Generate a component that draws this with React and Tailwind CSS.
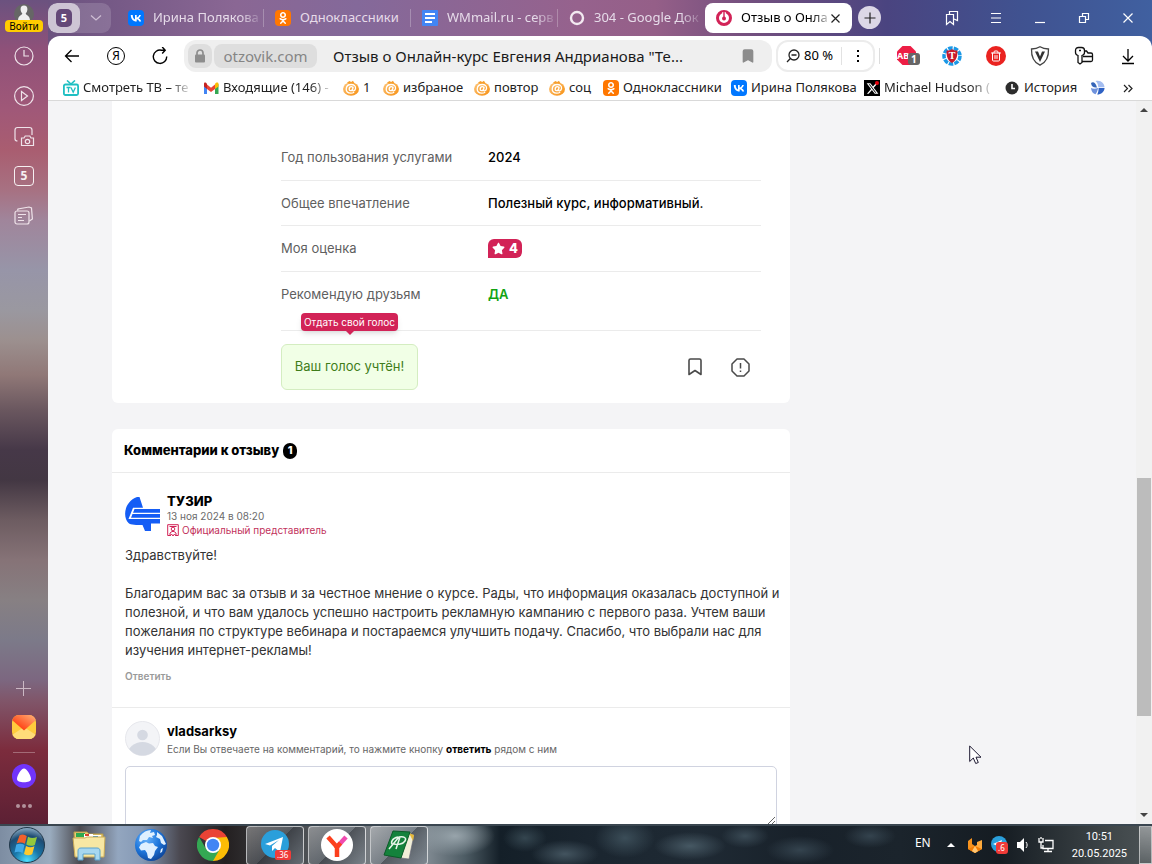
import React, { useState } from 'react';
import { FaOdnoklassniki, FaStar, FaXTwitter } from 'react-icons/fa6';
import { Bookmark, Trash2 } from 'lucide-react';

const VkIcon = () => (
  <svg className="size-4 shrink-0" viewBox="0 0 16 16">
    <rect width="16" height="16" rx="4" fill="#0077ff" />
    <path
      d="M8.600 11.500C5 11.500 2.900 9 2.800 5h1.900c.06 3 1.300 4.200 2.300 4.500V5h1.700v2.500c1-.1 2.100-1.300 2.500-2.500h1.700c-.3 1.500-1.400 2.700-2.300 3.200.8.4 2.100 1.400 2.600 3.300h-1.900c-.4-1.200-1.400-2.200-2.600-2.300v2.300z"
      fill="#fff"
    />
  </svg>
);

const OkIcon = () => (
  <span className="flex size-4 shrink-0 items-center justify-center rounded bg-[#ff7700] text-white">
    <FaOdnoklassniki size={12} />
  </span>
);

const DocIcon = () => (
  <svg className="size-4 shrink-0" viewBox="0 0 16 16">
    <rect width="16" height="16" rx="1" fill="#4285f4" />
    <path d="M3 4h10M3 8h10M3 12h7" stroke="#fff" strokeWidth="1.8" />
  </svg>
);

const RingIcon = () => (
  <svg className="size-4 shrink-0" viewBox="0 0 16 16" fill="none">
    <circle cx="8" cy="8" r="6" stroke="#f3e9f1" strokeWidth="2.4" />
  </svg>
);

const OtzovikIcon = () => (
  <svg className="size-4 shrink-0" viewBox="0 0 16 16" fill="none">
    <circle cx="8" cy="8" r="6.5" stroke="#d22357" strokeWidth="3" />
    <path d="M8 2v4" stroke="#fff" strokeWidth="3.4" />
    <path d="M8 1v6" stroke="#d22357" strokeWidth="1.4" />
    <circle cx="8" cy="8.4" r="2" fill="#d22357" />
  </svg>
);

const AtIcon = () => (
  <svg className="size-4 shrink-0" viewBox="0 0 16 16">
    <defs>
      <linearGradient id="atFill" x1="0" y1="0" x2="1" y2="1">
        <stop offset="0" stopColor="#fdc67c" />
        <stop offset="1" stopColor="#f78f0f" />
      </linearGradient>
    </defs>
    <ellipse cx="8" cy="9" rx="8" ry="6.8" fill="url(#atFill)" />
    <path d="M4 2.6 6.6 1l1.500 1L10 .8l1.400 2.400L8 5z" fill="#f6a02e" />
    <path
      d="M10.200 6.600 9.500 10c-.2 1.500 2.600 1.200 3-1.300.4-2.600-1.600-4.200-4.300-4.200C5.300 4.500 3.300 6.500 3.200 9.100c0 2.700 2 4.100 4.500 4.100 1.400 0 2.600-.4 3.500-1M9.900 8.400c0-1.200-.7-1.700-1.500-1.700-1.300 0-2.200 1.200-2.200 2.500 0 1 .5 1.500 1.300 1.500 1.200 0 2.200-1 2.400-2.300z"
      fill="none"
      stroke="#fff"
      strokeWidth="1.3"
    />
  </svg>
);

const TvIcon = () => (
  <svg className="size-4 shrink-0" viewBox="0 0 16 16" fill="none">
    <rect x=".9" y="4.500" width="14.200" height="10.500" rx="1.500" stroke="#1fbfc2" strokeWidth="1.8" />
    <path d="M4 .5 8 4l4-3.500" stroke="#1fbfc2" strokeWidth="1.6" />
    <path d="M3.500 7.500h4M5.500 7.500v5M8 7.500l2.200 4.700 2.200-4.700" stroke="#1fbfc2" strokeWidth="1.300" />
  </svg>
);

const GmailIcon = () => (
  <svg className="size-4 shrink-0" viewBox="0 0 16 16">
    <path d="M1 14V4l3 2.300V14z" fill="#4285f4" />
    <path d="M12 14V6.300L15.500 4v10z" fill="#34a853" />
    <path d="M4 9V4.500l4 3.200 4-3.200V9l-4 3z" fill="#ea4335" />
    <path d="M1 6.500V4c0-1.700 1.700-2 3 0v5z" fill="#c5221f" />
    <path d="M15.500 6.500V4c0-1.700-2.200-2-3.500 0v5z" fill="#fbbc04" />
  </svg>
);

const XIcon = () => (
  <span className="relative flex size-4 shrink-0 items-center justify-center bg-black text-white">
    <FaXTwitter size={13} />
    <span className="absolute top-px right-px size-1 rounded-full bg-red-600"></span>
  </span>
);

const HistoryIcon = () => (
  <svg className="size-4 shrink-0" viewBox="0 0 16 16">
    <circle cx="8" cy="8" r="6.500" fill="#2d2d2d" />
    <path d="M8 4v4.500h3" fill="none" stroke="#fff" strokeWidth="1.600" />
  </svg>
);

const SwirlIcon = () => (
  <svg className="size-4 shrink-0" viewBox="0 0 16 16">
    <path d="M1 3c2-1.500 4.500-.8 6 4.500C4 8 1.500 7 1 3z" fill="#3565b8" />
    <path d="M5.500 1c5-1.500 9 2 9 6.300H8.300C8 4.500 7.500 2.500 5.500 1z" fill="#a4bdf0" />
    <path d="M1 8c2.500 1 5 .8 7-.3-.3 2.700-1 4.700-2.500 6.500C3 13.500 1.300 11.500 1 8z" fill="#6f92dc" />
    <path d="M8.600 8h6c-.5 4-3.300 6.500-7.400 6.500C8.300 12.500 8.600 10.500 8.600 8z" fill="#2f62c4" />
  </svg>
);

const tabs = [
  { title: 'Ирина Полякова', icon: VkIcon, fade: true },
  { title: 'Одноклассники', icon: OkIcon },
  { title: 'WMmail.ru - серв', icon: DocIcon, fade: true },
  { title: '304 - Google Док', icon: RingIcon, fade: true },
];

const bookmarks = [
  { title: 'Смотреть ТВ – те', icon: TvIcon, width: 'w-[140px]', fade: true },
  { title: 'Входящие (146) -', icon: GmailIcon, width: 'w-[140px]', fade: true },
  { title: '1', icon: AtIcon, width: 'w-10' },
  { title: 'избраное', icon: AtIcon, width: 'w-[91px]' },
  { title: 'повтор', icon: AtIcon, width: 'w-[75px]' },
  { title: 'соц', icon: AtIcon, width: 'w-[54px]' },
  { title: 'Одноклассники', icon: OkIcon, width: 'w-[128px]' },
  { title: 'Ирина Полякова', icon: VkIcon, width: 'w-[133px]' },
  { title: 'Michael Hudson (', icon: XIcon, width: 'w-[140px]', fade: true },
  { title: 'История', icon: HistoryIcon, width: 'w-[86px]' },
  { title: '', icon: SwirlIcon, width: 'w-3.5' },
];

const FADE = '[mask-image:linear-gradient(to_right,black_82%,rgba(0,0,0,0.2))]';

const WindowButton = ({ label, children }) => (
  <button aria-label={label} className="flex h-9 w-11 items-center justify-center">
    <svg width="18" height="18" viewBox="0 0 18 18" fill="none" stroke="#fff" strokeWidth="1.200">
      {children}
    </svg>
  </button>
);

const TabBar = () => (
  <div className="flex h-9 items-center text-[13px]">
    <div className="flex h-[30px] w-[63px] shrink-0 overflow-hidden rounded-[9px] bg-white/15">
      <button className="flex w-8 items-center justify-center rounded-[9px] bg-white/60" aria-label="Группа вкладок">
        <span className="flex h-[18px] w-4 items-center justify-center rounded-[5px] bg-[#644878] text-[11px] font-bold text-white">
          5
        </span>
      </button>
      <button className="flex flex-1 items-center justify-center" aria-label="Список вкладок">
        <svg width="12" height="8" viewBox="0 0 12 8" fill="none" stroke="#cdbdd3" strokeWidth="1.300">
          <path d="m1 1.500 5 4.500 5-4.500" />
        </svg>
      </button>
    </div>
    <div className="ml-1.5 flex min-w-0 flex-1">
      {tabs.map(({ title, icon: Icon, fade }, i) => (
        <button
          key={title}
          className={`my-1.5 flex h-[18px] max-w-[147px] flex-1 items-center gap-[9px] pl-[11px] whitespace-nowrap text-[#e6dbe9] ${
            i < 3 ? 'border-r border-white/25' : ''
          }`}
        >
          <Icon />
          <span className={fade ? FADE : ''}>{title}</span>
        </button>
      ))}
      <div className="flex h-[30px] max-w-[147px] flex-1 items-center rounded-lg bg-white pl-[11px] whitespace-nowrap text-black">
        <OtzovikIcon />
        <span className={`ml-[9px] ${FADE}`}>Отзыв о Онла</span>
        <button aria-label="Закрыть вкладку" className="mr-3 ml-auto">
          <svg width="9" height="9" viewBox="0 0 9 9" stroke="#222" strokeWidth="1.200">
            <path d="m.5.5 8 8m0-8-8 8" />
          </svg>
        </button>
      </div>
      <button
        aria-label="Новая вкладка"
        className="mt-[3px] ml-1.5 flex size-[23px] shrink-0 items-center justify-center rounded-full bg-[#dcd7e6]"
      >
        <svg width="12" height="12" viewBox="0 0 12 12" stroke="#222" strokeWidth="1.200">
          <path d="M6 .5v11M.5 6h11" />
        </svg>
      </button>
    </div>
    <div className="mr-0.5 flex shrink-0">
      <WindowButton label="Закладки">
        <path d="M3.500 5.500h7v10L7 12.500l-3.500 3zM6.500 5.500v-3h8v9l-3.500-1.500" />
      </WindowButton>
      <WindowButton label="Меню">
        <path d="M4 4.500h10M4 9h10M4 13.500h10" />
      </WindowButton>
      <WindowButton label="Свернуть">
        <path d="M4 13.500h10" />
      </WindowButton>
      <WindowButton label="Развернуть">
        <path d="M4.500 7.500h6v6h-6zM7.500 7.500v-3h6v6h-3" />
      </WindowButton>
      <WindowButton label="Закрыть">
        <path d="m4.500 4.500 9 9m0-9-9 9" />
      </WindowButton>
    </div>
  </div>
);

const ToolButton = ({ label, children }) => (
  <button aria-label={label} className="flex h-8 w-11 shrink-0 items-center justify-center">
    {children}
  </button>
);

const Toolbar = () => (
  <div className="flex h-10 items-center pl-0.5">
    <ToolButton label="Назад">
      <svg width="16" height="16" viewBox="0 0 16 16" fill="none" stroke="#000" strokeWidth="1.300">
        <path d="M15 8H2M7.500 2 1.500 8l6 6" />
      </svg>
    </ToolButton>
    <button
      aria-label="Яндекс"
      className="mx-[13px] flex size-[18px] shrink-0 items-center justify-center rounded-full border border-black text-xs leading-none"
    >
      Я
    </button>
    <ToolButton label="Обновить">
      <svg width="18" height="18" viewBox="0 0 18 18" fill="none" stroke="#000" strokeWidth="1.400">
        <path d="M10.500 3.200a6.700 6.700 0 1 0 5.200 6.300M9 3.200h5M11.200 0l3 3.200-3 3.200" />
      </svg>
    </ToolButton>
    <div className="ml-0.5 flex h-8 min-w-0 flex-1 items-center gap-0.5 rounded-xl bg-[#efefef] pr-4 pl-1 text-[15px]">
      <button aria-label="Защищено" className="flex size-6 shrink-0 items-center justify-center rounded-lg bg-[#dedede]">
        <svg width="12" height="14" viewBox="0 0 12 14">
          <rect x="1" y="5.500" width="10" height="8" rx="1" fill="#8d8d8d" />
          <path d="M3 6V4a3 3 0 0 1 6 0v2" fill="none" stroke="#8d8d8d" strokeWidth="1.700" />
        </svg>
      </button>
      <a href="#" className="flex h-6 w-[103px] shrink-0 items-center justify-center rounded-lg bg-[#dedede] text-[#858585]">
        otzovik.com
      </a>
      <span className="ml-3.5 min-w-0 flex-1 truncate text-[#1a1a1a]">Отзыв о Онлайн-курс Евгения Андрианова "Те...</span>
      <button aria-label="В закладки">
        <Bookmark size={16} fill="#8c8c8c" stroke="#8c8c8c" />
      </button>
    </div>
    <div className="ml-1 flex h-8 w-[99px] shrink-0 items-center rounded-xl border-2 border-[#ececec]">
      <button className="flex flex-1 items-center justify-center gap-1 text-[13px]">
        <svg width="14" height="14" viewBox="0 0 14 14" fill="none" stroke="#222" strokeWidth="1.300">
          <circle cx="8" cy="6" r="5" />
          <path d="M4.400 9.500 1 13M5.500 6h5" />
        </svg>
        80 %
      </button>
      <span className="h-[18px] w-px bg-[#e2e2e2]"></span>
      <button aria-label="Ещё" className="flex w-[31px] flex-col items-center gap-[3px]">
        <span className="size-[2px] bg-black"></span>
        <span className="size-[2px] bg-black"></span>
        <span className="size-[2px] bg-black"></span>
      </button>
    </div>
    <span className="ml-1 h-4 w-px shrink-0 bg-[#dcdcdc]"></span>
    <div className="ml-[6px] flex shrink-0">
      <ToolButton label="Блокировщик рекламы">
        <svg width="24" height="22" viewBox="0 0 24 22">
          <path d="M6.500 1h8l5.500 5.500v8L14.500 20h-8L1 14.500v-8z" fill="#ed1e45" />
          <text x="1" y="14" fontSize="9" fontWeight="bold" fill="#fff" fontFamily="Noto Sans, sans-serif">
            AB
          </text>
          <rect x="12" y="8" width="12" height="12" rx="3" fill="#666" />
          <text x="15" y="18" fontSize="10" fontWeight="bold" fill="#fff" fontFamily="Noto Sans, sans-serif">
            1
          </text>
        </svg>
      </ToolButton>
      <ToolButton label="Переводчик">
        <svg width="20" height="20" viewBox="0 0 20 20">
          <circle cx="10" cy="10" r="8" fill="none" stroke="#1b98e6" strokeWidth="3.500" strokeDasharray="4.500 1.100" />
          <path d="M4.500 4.500c2 0 4.500-.5 5.500-1.500 1 1 3.500 1.500 5.500 1.500 0 6-1 10-5.500 12.500-4.500-2.500-5.500-6.500-5.500-12.500z" fill="#c91a2c" />
          <text x="6.700" y="13" fontSize="10" fontWeight="bold" fill="#fff" fontFamily="Liberation Serif, serif">
            T
          </text>
        </svg>
      </ToolButton>
      <ToolButton label="Очистка">
        <span className="flex size-5 items-center justify-center rounded-full bg-[#ea2320] text-white">
          <Trash2 size={12} />
        </span>
      </ToolButton>
      <ToolButton label="Защита">
        <svg width="20" height="20" viewBox="0 0 20 20" fill="none" stroke="#444">
          <path d="M10 .8c2.500 1.600 5.500 2.200 8.500 2.200.3 7.500-2 13.200-8.500 16.200C3.500 16.200 1.200 10.500 1.500 3 4.500 3 7.500 2.400 10 .8z" strokeWidth="1.300" />
          <path d="M5 5.500h3l2 5 2-5h3L10 16z" fill="#333" stroke="none" />
        </svg>
      </ToolButton>
      <ToolButton label="Пароли">
        <svg width="20" height="20" viewBox="0 0 20 20" fill="none" stroke="#111" strokeWidth="1.300">
          <path d="M4 9.500C2.500 9 1.500 8 1.500 6.500v-2C1.500 2.700 2.700 1.500 4.500 1.500h3c1.800 0 3 1.200 3 3v2c0 1.500-1 2.500-2.500 3v7L6 18l-2-1.500z" />
          <path d="M10.500 5h2l1.500 2h3c1 0 1.500.5 1.500 1.500V14c0 1-.5 1.500-1.500 1.500H8M9 10.500h9.500" />
          <path d="M5 4.500h2" />
        </svg>
      </ToolButton>
      <ToolButton label="Загрузки">
        <svg width="14" height="18" viewBox="0 0 14 18" fill="none" stroke="#000" strokeWidth="1.300">
          <path d="M7 2v12M2 9l5 5 5-5M1 16.500h12" />
        </svg>
      </ToolButton>
    </div>
    <span className="w-0.5 shrink-0"></span>
  </div>
);

const BookmarksBar = () => (
  <div className="flex h-[25px] shrink-0 items-center overflow-hidden border-b border-[#d9d9d9] pl-[15px] text-[13px] text-[#222]">
    {bookmarks.map(({ title, icon: Icon, width, fade }, i) => (
      <a key={i} href="#" className={`flex shrink-0 items-center gap-1 whitespace-nowrap ${width}`}>
        <Icon />
        <span className={fade ? FADE : ''}>{title}</span>
      </a>
    ))}
    <button aria-label="Другие закладки" className="ml-auto flex w-12 shrink-0 items-center justify-center">
      <svg width="10" height="9" viewBox="0 0 10 9" fill="none" stroke="#222" strokeWidth="1.200">
        <path d="m1 1 3.500 3.500L1 8m4.500-7L9 4.500 5.500 8" />
      </svg>
    </button>
  </div>
);

const SideButton = ({ label, children }) => (
  <button aria-label={label} className="flex h-10 w-full items-center justify-center">
    <svg width="22" height="22" viewBox="0 0 22 22" fill="none" stroke="#efe3ea" strokeWidth="1.200">
      {children}
    </svg>
  </button>
);

const Sidebar = () => (
  <aside className="flex w-12 shrink-0 flex-col items-center bg-[linear-gradient(to_bottom,#6b527f_0px,#8f5179_50px,#a05878_110px,#a95d70_150px,#a77182_190px,#a0859b_220px,#9795a8_270px,#9a98a0_310px,#9c908f_340px,#907877_375px,#6a575f_410px,#463848_450px,#433743_480px,#6d5c61_520px,#867377_560px,#878083_600px,#7c7a89_640px,#7c6780_680px,#80566a_700px,#7c2c3d_750px,#5c2034_824px)]">
    <button className="flex h-9 flex-col items-center pt-1">
      <svg width="20" height="16" viewBox="0 0 20 16">
        <circle cx="10" cy="10" r="10" fill="#666" />
        <path d="M10 1.500c2.300 0 3.600 1.500 3.400 4-.1 2-1 3.300-1.700 4 0 1.500 3.800 1.500 4.300 6.500H4c.5-5 4.300-5 4.300-6.500-.7-.7-1.600-2-1.700-4-.2-2.500 1.100-4 3.400-4z" fill="#f0f0f0" />
      </svg>
      <span className="rounded bg-[#ffcc00] px-1 text-[10px] leading-3 text-black">Войти</span>
    </button>
    <SideButton label="История">
      <circle cx="11" cy="11" r="9" />
      <path d="M11 5v6h5" />
    </SideButton>
    <SideButton label="Видео">
      <circle cx="11" cy="11" r="9.400" />
      <path d="m8.500 6.500 6 4.500-6 4.500z" />
    </SideButton>
    <SideButton label="Скриншот">
      <path d="M4.500 16C3 16 2 15.500 2 14V5c0-1.500 1-2.500 2.500-2.500h12C18 2.500 19 3.500 19 5v5M8.500 13h2.500l1.200-2h4.600l1.200 2h2.500v7.500H8.500z" />
      <circle cx="14.500" cy="16.500" r="2.200" />
    </SideButton>
    <button aria-label="Вкладки" className="flex h-10 items-center">
      <span className="flex size-5 items-center justify-center rounded border border-white/90 text-xs leading-none font-bold text-white/90">5</span>
    </button>
    <SideButton label="Коллекции">
      <rect x="2" y="6" width="14" height="13" rx="2" />
      <path d="M4.500 5.500 5 4l11-2 2.500 1 .9 11-3 2M5 9.500h8M5 12.500h4M5 15.500h6" />
    </SideButton>

    <button aria-label="Добавить" className="mt-auto">
      <svg width="16" height="16" viewBox="0 0 16 16" stroke="#cbb8c4">
        <path d="M7.500 0v15M0 7.500h15" />
      </svg>
    </button>
    <button aria-label="Почта" className="mt-[18px]">
      <svg width="24" height="24" viewBox="0 0 24 24">
        <defs>
          <linearGradient id="mailFlap" x1="1" y1="0" x2="0" y2="1">
            <stop offset="0" stopColor="#ffb37a" />
            <stop offset=".7" stopColor="#ff4a1c" />
          </linearGradient>
          <clipPath id="mailClip">
            <rect width="24" height="24" rx="7" />
          </clipPath>
        </defs>
        <g clipPath="url(#mailClip)">
          <path d="M0 0h24v24H0z" fill="#ffcb3d" />
          <path d="M0 24 12 13l12 11z" fill="#ffdf80" />
          <path d="M0 20 12 12l12 8v4H0z" fill="#ffdc79" />
          <path d="M0 0h24v5L12 15.500 0 5z" fill="url(#mailFlap)" />
        </g>
      </svg>
    </button>
    <span className="mt-[13px] h-px w-[22px] bg-white/30"></span>
    <button aria-label="Алиса" className="mt-[11px]">
      <svg width="24" height="24" viewBox="0 0 24 24">
        <circle cx="12" cy="12" r="12" fill="#7134fb" />
        <path d="M12 4.500c2.500 0 7 6.500 7 10.500 0 2.500-3 3.200-7 3.200s-7-.7-7-3.200c0-4 4.500-10.500 7-10.500z" fill="#fff" />
      </svg>
    </button>
    <button aria-label="Ещё" className="flex h-9 items-center gap-0.5">
      <span className="size-1 rounded-full bg-white/50"></span>
      <span className="size-1 rounded-full bg-white/50"></span>
      <span className="size-1 rounded-full bg-white/50"></span>
    </button>
  </aside>
);

const ReviewRow = ({ label, height, children }) => (
  <div className={`flex border-b border-[#ebebeb] ${height}`}>
    <dt className="flex h-[45px] w-[207px] shrink-0 items-center text-[#5f5f5f]">{label}</dt>
    <dd className="flex h-[45px] items-center font-medium text-black">{children}</dd>
  </div>
);

const ReviewCard = () => (
  <section className="w-full max-w-[678px] rounded-b-md bg-white pt-[34px] pr-[29px] pb-[13px] pl-[169px]">
    <dl>
      <ReviewRow label="Год пользования услугами" height="h-[46px]">
        2024
      </ReviewRow>
      <ReviewRow label="Общее впечатление" height="h-[45px]">
        Полезный курс, информативный.
      </ReviewRow>
      <ReviewRow label="Моя оценка" height="h-[46px]">
        <span className="flex h-[19px] w-[34px] items-center justify-center gap-1 rounded-md rounded-bl-none bg-[#d22357] font-extrabold text-white">
          <FaStar size={13} />4
        </span>
      </ReviewRow>
      <ReviewRow label="Рекомендую друзьям" height="h-[59px]">
        <span className="font-semibold text-[#12a312]">ДА</span>
      </ReviewRow>
    </dl>
    <div className="mt-[13px] flex items-center">
      <div className="relative">
        <button className="h-[46px] w-[137px] rounded-md border border-[#d4edc1] bg-[#f1ffe6] whitespace-nowrap text-[#3f7d1a]">
          Ваш голос учтён!
        </button>
        <div
          role="tooltip"
          className="absolute bottom-[59px] left-5 flex h-[18px] w-[97px] items-center justify-center rounded-sm bg-[#d22357] text-[10px] whitespace-nowrap text-white shadow-md"
        >
          Отдать свой голос
          <span className="absolute top-full border-x-4 border-t-4 border-x-transparent border-t-[#d22357]"></span>
        </div>
      </div>
      <button aria-label="В закладки" className="ml-auto">
        <svg width="14" height="18" viewBox="0 0 14 18" fill="none" stroke="#4a4a4a" strokeWidth="1.600">
          <path d="M1 2.500C1 1.500 1.500 1 2.500 1h9c1 0 1.500.5 1.500 1.500v14l-6-4-6 4z" strokeLinejoin="round" />
        </svg>
      </button>
      <button aria-label="Пожаловаться" className="mr-[11px] ml-[29px]">
        <svg width="19" height="19" viewBox="0 0 19 19" fill="none" stroke="#4a4a4a" strokeWidth="1.500">
          <path d="M6 1h7l5 5v7l-5 5H6l-5-5V6z" strokeLinejoin="round" />
          <path d="M9.500 5v5.500M9.500 12.500V14" />
        </svg>
      </button>
    </div>
  </section>
);

const CommentsCard = () => {
  const [comment, setComment] = useState('');

  return (
    <section className="mt-[26px] w-full max-w-[678px] rounded-t-md bg-white">
      <h2 className="flex h-11 items-center gap-1 border-b border-[#ebebeb] pl-3 font-extrabold text-black">
        Комментарии к отзыву
        <span className="flex h-4 w-3.5 items-center justify-center rounded-full bg-black text-[11px] text-white">1</span>
      </h2>

      <article className="h-[235px] border-b border-[#ebebeb] px-[13px] pt-5">
        <header className="flex gap-[7px]">
          <svg className="mt-1 shrink-0" width="35" height="35" viewBox="0 0 35 35" fill="#155df5">
            <path d="M12 0h2.500L18 10.800H8L3.500 22H35v4.500h-9L26 34h-6l-2.500-6C12 28 5.500 28 3.500 26-2.500 20-1 5 12 0z" />
            <path d="M9.500 12H35v3.800H8zM7.500 17H35v3.800H6z" />
          </svg>
          <div>
            <a href="#" className="block leading-4 font-extrabold text-black">
              ТУЗИР
            </a>
            <time className="block text-[10px] leading-[14px] text-[#6b6b6b]">13 ноя 2024 в 08:20</time>
            <p className="flex items-center gap-[3px] text-[10px] leading-[14px] text-[#c2325c]">
              <svg width="12" height="12" viewBox="0 0 12 12" fill="none" stroke="#d22357">
                <path d="M3 11.500H.7V.7h10.600v10.800H9" />
                <circle cx="6" cy="5" r="1.800" />
                <path d="M2.500 2.500h7M3 9l2-1.500h2L9 9v3L7.500 10 6 12l-1.500-2L3 12z" />
              </svg>
              Официальный представитель
            </p>
          </div>
        </header>
        <p className="mt-[9px] leading-[19px] whitespace-nowrap text-[#333]">
          Здравствуйте!
          <br />
          <br />
          Благодарим вас за отзыв и за честное мнение о курсе. Рады, что информация оказалась доступной и
          <br />
          полезной, и что вам удалось успешно настроить рекламную кампанию с первого раза. Учтем ваши
          <br />
          пожелания по структуре вебинара и постараемся улучшить подачу. Спасибо, что выбрали нас для
          <br />
          изучения интернет-рекламы!
        </p>
        <button className="mt-2 block text-[10px] leading-4 font-semibold text-[#9a9a9a]">Ответить</button>
      </article>

      <form className="px-[13px] pt-[13px]">
        <div className="flex gap-[7px]">
          <svg className="shrink-0" width="35" height="35" viewBox="0 0 35 35">
            <defs>
              <clipPath id="userClip">
                <circle cx="17.500" cy="17.500" r="17" />
              </clipPath>
            </defs>
            <circle cx="17.500" cy="17.500" r="17" fill="#f3f4f7" stroke="#e6e7ec" />
            <g clipPath="url(#userClip)" fill="#d5d9e2">
              <circle cx="17.500" cy="14" r="5.300" />
              <ellipse cx="17.500" cy="34" rx="15" ry="13" />
            </g>
          </svg>
          <div className="pt-0.5">
            <div className="leading-[17px] font-bold text-black">vladsarksy</div>
            <label htmlFor="comment" className="block text-[10px] leading-[18px] text-[#666]">
              Если Вы отвечаете на комментарий, то нажмите кнопку <b className="font-bold text-black">ответить</b> рядом с ним
            </label>
          </div>
        </div>
        <textarea
          id="comment"
          value={comment}
          onChange={(e) => setComment(e.target.value)}
          className="mt-2 block h-[60px] w-full rounded-t-[5px] border border-[#d0d3e0] bg-white p-2"
        />
      </form>
    </section>
  );
};

const Scrollbar = () => (
  <div aria-hidden="true" className="flex w-4 shrink-0 flex-col items-center bg-[#f1f1f1]">
    <span className="flex h-[17px] items-center">
      <span className="border-x-4 border-b-4 border-x-transparent border-b-[#444]"></span>
    </span>
    <span className="grow-[360]"></span>
    <span className="w-3.5 grow-[238] bg-[#bcbcbc]"></span>
    <span className="grow-[90]"></span>
    <span className="flex h-[18px] items-center">
      <span className="border-x-4 border-t-4 border-x-transparent border-t-[#444]"></span>
    </span>
  </div>
);

const TaskButton = ({ label, active, children }) => (
  <button
    aria-label={label}
    className={`flex items-center justify-center ${
      active
        ? 'mx-0.5 h-[39px] w-[58px] rounded-sm border border-white/60 bg-[linear-gradient(135deg,rgba(255,255,255,0.35),rgba(120,130,140,0.35)_50%,rgba(60,65,72,0.6)_50%,rgba(130,140,150,0.5))]'
        : 'h-10 w-[62px]'
    }`}
  >
    {children}
  </button>
);

const Taskbar = () => (
  <footer className="flex h-10 shrink-0 items-center border-t-2 border-[#3a4650] bg-[radial-gradient(ellipse_40px_20px_at_455px_10px,#98a4ab,transparent),radial-gradient(ellipse_22px_14px_at_525px_12px,#34454f,transparent),radial-gradient(ellipse_34px_14px_at_565px_28px,#43545f,transparent),radial-gradient(ellipse_30px_20px_at_625px_12px,#3b4d58,transparent),radial-gradient(ellipse_36px_14px_at_690px_20px,#465863,transparent),radial-gradient(ellipse_24px_12px_at_745px_10px,#3a4a55,transparent),radial-gradient(ellipse_34px_14px_at_800px_24px,#34434e,transparent),radial-gradient(ellipse_26px_12px_at_870px_10px,#34434e,transparent),linear-gradient(to_right,#7d8da2_0px,#9aacbf_50px,#4b4a50_80px,#93a6bf_118px,#8599b5_142px,#4a4850_180px,#231f20_225px,#494c50_300px,#767b80_370px,#7c868e_430px,#4d5c64_465px,#141f28_500px,#1b2630_600px,#1f2a34_700px,#18212a_800px,#1b242c_900px,#151c22_1000px,#3f4649_1110px,#4c5356_1152px)]">
    <button aria-label="Пуск" className="ml-2 flex w-[38px] justify-center">
      <svg width="38" height="38" viewBox="0 0 38 38">
        <defs>
          <radialGradient id="orb" cx=".5" cy=".95" r=".95">
            <stop offset="0" stopColor="#4de0ff" />
            <stop offset=".4" stopColor="#1876a8" />
            <stop offset=".75" stopColor="#1f4c73" />
            <stop offset="1" stopColor="#8fb0c8" />
          </radialGradient>
        </defs>
        <circle cx="19" cy="19" r="17.500" fill="url(#orb)" stroke="#22384a" />
        <path d="M11.500 9.500c2.500-1.500 5-1.200 7.300.5l-1.900 7.800c-2.700-1.700-5-1.800-8.200-.5z" fill="#f2602b" />
        <path d="M20 10.700c3 1.700 5.500 1.700 9 .2l-2.200 8c-3 1.300-5.700 1.200-8.500-.3z" fill="#94c83d" />
        <path d="M8.300 18.600c3-1.300 5.500-1 8.200.5l-2 8c-2.500-1.700-5-1.800-8-.5z" fill="#3fa9e8" />
        <path d="M18 20c3 1.500 5.500 1.500 8.400.3l-2.200 8c-3 1.500-5.500 1.200-8.200-.3z" fill="#fdc92d" />
      </svg>
    </button>
    <span className="w-3"></span>
    <TaskButton label="Проводник">
      <svg width="34" height="32" viewBox="0 0 34 32">
        <path d="M2 3h13l2 2h14v22H3z" fill="#e8ce73" stroke="#b89a48" />
        <path d="M4 4h9v4H4z" fill="#2fa84f" />
        <path d="M12 5h9v4h-9z" fill="#fff" />
        <path d="M13 5h4v2h-4z" fill="#d8432e" />
        <path d="M20 6h9v4h-9z" fill="#fff" />
        <path d="M21 7h5v2h-5z" fill="#2a8fd8" />
        <path d="M1 9h12l2-1h18l-1 20H3z" fill="#f7e7a3" stroke="#c9ab58" />
        <path d="M6 31V22c0-2 1-3 3-3h16c2 0 3 1 3 3v9h-5v-6H11v6z" fill="#a6d7f0" stroke="#5aa2cc" />
      </svg>
    </TaskButton>
    <TaskButton label="Интернет">
      <svg width="34" height="34" viewBox="0 0 34 34">
        <defs>
          <radialGradient id="globe" cx=".35" cy=".3" r=".8">
            <stop offset="0" stopColor="#6bb4fb" />
            <stop offset=".5" stopColor="#1f78dd" />
            <stop offset="1" stopColor="#0b3f91" />
          </radialGradient>
        </defs>
        <circle cx="17" cy="17" r="16" fill="url(#globe)" />
        <path
          d="M6 8c3-4 7-6 11-6l-1 3 4-1 1 3-3 1 1 2-4-1-2 3-4 0-2 2-2-1zM7 16l5-2 3 1.500 4-.5 2 3 3 1-3 4-1 4-3 4-3-1-1-5-2-3-4 .5-2-3zM23 4l5 4 4 8-2 1-3-2-1-4-4-2 1-2zM27 21l2-1-1 4-2 1z"
          fill="#dff0ff"
        />
      </svg>
    </TaskButton>
    <TaskButton label="Chrome">
      <svg width="32" height="32" viewBox="0 0 32 32">
        <path d="M16 16 2.140 8A16 16 0 0 1 29.860 8z" fill="#ea4335" />
        <path d="M16 16V8h13.860A16 16 0 0 1 16 32z" fill="#fbbc05" />
        <path d="M22.900 20 16 32A16 16 0 0 1 2.140 8l6.930 12z" fill="#34a853" />
        <path d="M9 8h20.860L16 9z" fill="#ea4335" />
        <circle cx="16" cy="16" r="8" fill="#fff" />
        <circle cx="16" cy="16" r="6.200" fill="#4285f4" />
      </svg>
    </TaskButton>
    <TaskButton label="Telegram" active>
      <svg width="32" height="32" viewBox="0 0 32 32">
        <circle cx="16" cy="15" r="14" fill="#2a9fdb" />
        <path d="m6 15 18-7-3 15-5-4-3 3v-5l7-6-9 5.500z" fill="#fff" />
        <rect x="16" y="21" width="16" height="10" rx="2" fill="#f03b38" />
        <text x="18" y="29" fontSize="8" fill="#fff" fontFamily="Noto Sans, sans-serif">
          .36
        </text>
      </svg>
    </TaskButton>
    <TaskButton label="Яндекс Браузер" active>
      <svg width="32" height="32" viewBox="0 0 32 32">
        <circle cx="16" cy="16" r="16" fill="#fff" />
        <path d="m7 8 9 10v10" fill="none" stroke="#fc3f1d" strokeWidth="4.500" />
        <path d="m16 18 9-10" fill="none" stroke="#f04bb0" strokeWidth="4.500" />
        <path d="m14.500 19.500 5-5.500" fill="none" stroke="#fc3f1d" strokeWidth="4.500" />
      </svg>
    </TaskButton>
    <TaskButton label="Блокнот" active>
      <svg width="32" height="32" viewBox="0 0 32 32">
        <path d="m24 4 7 2-5 24-8-1z" fill="#f0eed8" stroke="#667" strokeWidth=".6" />
        <path d="m26 4 5 2-1 6z" fill="#e4b83a" />
        <path d="M10 2 27 3 18 29 1 26z" fill="#14823c" stroke="#0b5c28" />
        <path d="M6 20 16 8c5-1 8 1 6 4s-7 4-11 3M15 8c-6 1-8 6-5 8m7-8-4 12" fill="none" stroke="#e8f5ea" strokeWidth="1.500" />
      </svg>
    </TaskButton>
    <div className="ml-auto flex h-full items-center text-white">
      <button className="mb-1 text-xs">EN</button>
      <button aria-label="Скрытые значки" className="ml-4 border-x-4 border-b-4 border-x-transparent border-b-white"></button>
      <svg className="ml-3" width="16" height="16" viewBox="0 0 16 16">
        <path d="m1 4 4-3v6l3 2v7l-7-4z" fill="#f7931e" />
        <path d="m8 9 2-1V5l5-2v9l-7 4z" fill="#ffab3d" />
        <path d="m1 12 7-3 7 3-7 4z" fill="#f57c00" />
        <path d="m8 9-3 5 3 2 3-2z" fill="#ffc875" />
      </svg>
      <svg className="ml-2" width="17" height="18" viewBox="0 0 17 18">
        <circle cx="8" cy="8" r="8" fill="#2a9fdb" />
        <path d="m2 8 9-4-2 7z" fill="#fff" />
        <rect x="5" y="6" width="12" height="12" rx="3" fill="#f03b38" />
        <text x="7" y="15" fontSize="8" fill="#fff" fontFamily="Noto Sans, sans-serif">
          .6
        </text>
      </svg>
      <svg className="ml-2" width="14" height="16" viewBox="0 0 14 16">
        <path d="M1 5h3l4-4v14l-4-4H1z" fill="#fff" />
        <path d="M10 5c1.500 2 1.500 4 0 6" fill="none" stroke="#fff" />
      </svg>
      <svg className="ml-2" width="16" height="16" viewBox="0 0 16 16" fill="none" stroke="#fff" strokeWidth="1.300">
        <path d="M7 3.500h8v8H5V8M10 11.500v3M6 14.500h8M1 1v4h4V1M3 5v6h2M3 0v2" />
      </svg>
      <time className="ml-[18px] text-center text-[11px] leading-[17px] [font-family:Roboto,sans-serif]">
        10:51
        <br />
        20.05.2025
      </time>
      <button
        aria-label="Показать рабочий стол"
        className="ml-3 h-full w-[13px] border border-white/50 bg-linear-to-b from-white/40 to-white/10"
      ></button>
    </div>
  </footer>
);

const App = () => (
  <div className="flex h-screen flex-col overflow-hidden [font-family:'Noto_Sans',sans-serif]">
    <div className="flex min-h-0 flex-1">
      <Sidebar />
      <div className="flex min-w-0 flex-1 flex-col bg-[linear-gradient(to_right,#6b527f_0%,#8a6794_17%,#84699a_28%,#96628d_48%,#955f88_55%,#75507f_63%,#4a4480_76%,#405290_88%,#4060a0_100%)] bg-[length:100%_60px] bg-no-repeat">
        <TabBar />
        <div className="rounded-t-xl bg-white">
          <Toolbar />
          <BookmarksBar />
        </div>
        <div className="flex min-h-0 flex-1">
          <main className="min-w-0 flex-1 overflow-hidden bg-[#f4f4f6] pl-16 text-[13px] [font-family:Inter,sans-serif]">
            <ReviewCard />
            <CommentsCard />
          </main>
          <Scrollbar />
        </div>
      </div>
    </div>
    <Taskbar />
    <svg className="pointer-events-none absolute top-[745px] left-[969px]" width="13" height="20" viewBox="0 0 13 20">
      <path d="M.7 1v15.500L4.300 13l2.400 5.500 2.600-1L7 12.200h5z" fill="#fff" stroke="#1c1830" />
    </svg>
  </div>
);

export default App;
